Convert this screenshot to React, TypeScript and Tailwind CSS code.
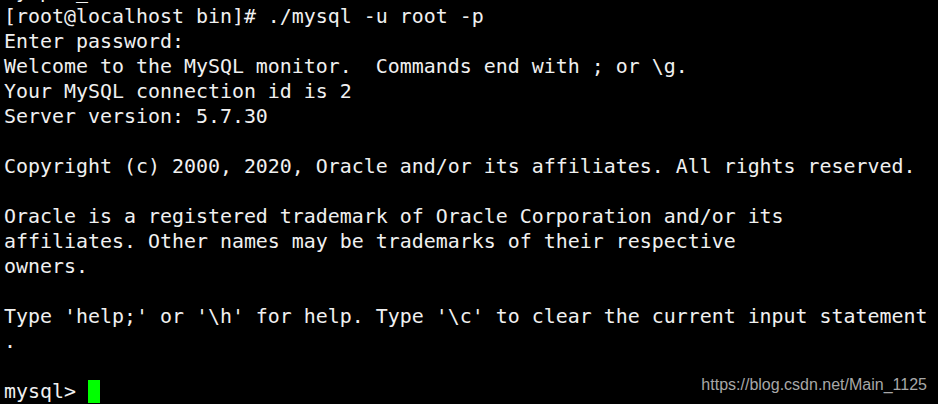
const lines = [
  " y p  _",
  "[root@localhost bin]# ./mysql -u root -p",
  "Enter password:",
  "Welcome to the MySQL monitor.  Commands end with ; or \\g.",
  "Your MySQL connection id is 2",
  "Server version: 5.7.30",
  "",
  "Copyright (c) 2000, 2020, Oracle and/or its affiliates. All rights reserved.",
  "",
  "Oracle is a registered trademark of Oracle Corporation and/or its",
  "affiliates. Other names may be trademarks of their respective",
  "owners.",
  "",
  "Type 'help;' or '\\h' for help. Type '\\c' to clear the current input statement",
  ".",
  "",
];

export default function App() {
  return (
    <div className="relative h-[404px] w-[938px] overflow-hidden bg-black">
      <pre className="-mt-[21px] pl-[4px] font-['DejaVu_Sans_Mono',monospace] text-[19.93px] leading-[25px] text-[#f0f0f0]">
        {lines.map((line, i) => (
          <div key={i} className="h-[25px] whitespace-pre">
            {line}
          </div>
        ))}
        <div className="h-[25px] whitespace-pre">
          {"mysql> "}
          <span className="bg-[#00ff00]">{"\u00a0"}</span>
        </div>
      </pre>
      <span className="absolute bottom-[10px] right-[11px] font-['Liberation_Sans',Arial,sans-serif] text-[16px] leading-[18px] text-[#a8a8a8]">
        https://blog.csdn.net/Main_1125
      </span>
    </div>
  );
}
